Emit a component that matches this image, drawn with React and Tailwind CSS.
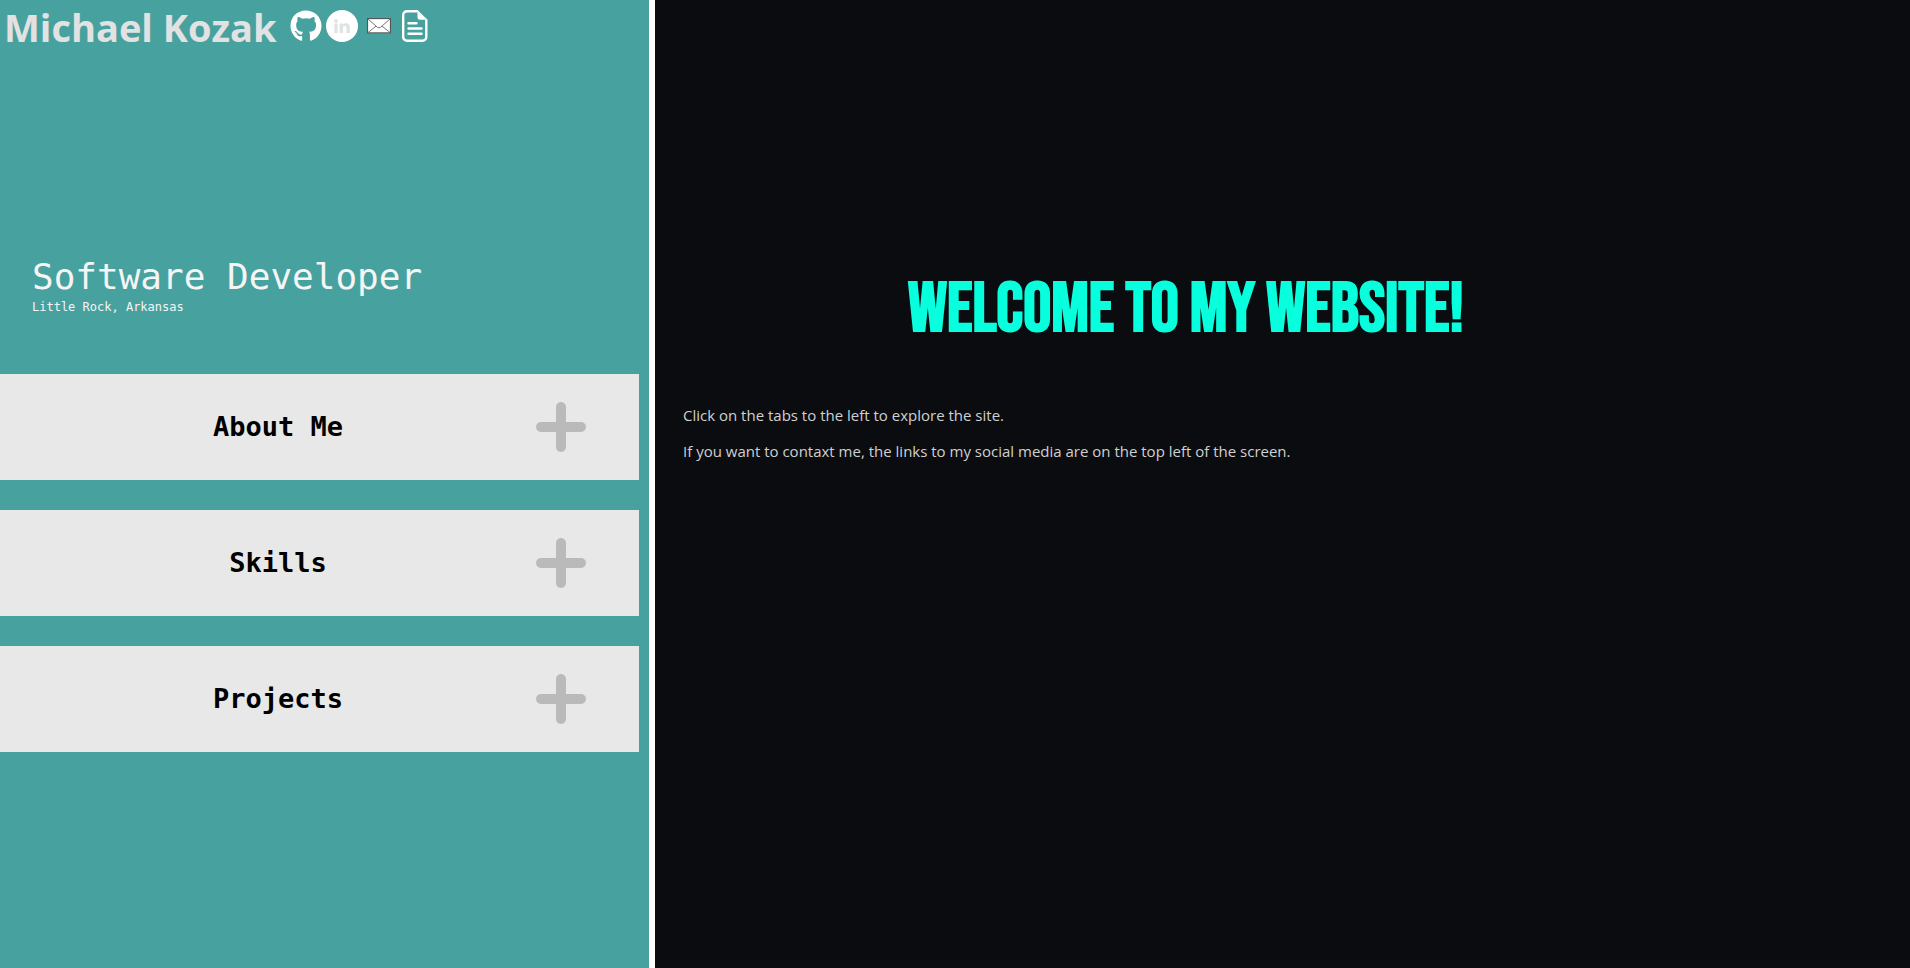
import { FaGithub } from "react-icons/fa";

const tabs = ["About Me", "Skills", "Projects"];

function LinkedInIcon() {
  return (
    <svg viewBox="0 0 32 32" className="size-8" aria-hidden="true">
      <circle cx="16" cy="16" r="16" fill="#fff" />
      <g fill="#dfe3e3">
        <circle cx="10" cy="11" r="1.9" />
        <rect x="8.4" y="13.6" width="3.3" height="9.4" />
        <path d="M13.6 13.6h3.1v1.4c.6-1 1.7-1.7 3.2-1.7 3 0 3.9 1.9 3.9 4.7v5h-3.3v-4.6c0-1.300-.3-2.400-1.700-2.400s-1.900 1-1.900 2.400V23h-3.300z" />
      </g>
    </svg>
  );
}

function MailIcon() {
  return (
    <svg viewBox="0 0 24 16" className="h-4 w-6" aria-hidden="true">
      <rect x="0.600" y="0.600" width="22.800" height="14.300" fill="#fff" stroke="#4a4a4a" />
      <path d="M1 1l9.300 8.200q1.700 1.300 3.400 0L23 1M1 14.500l8-6.300M23 14.500l-8-6.300" fill="none" stroke="#6a6a6a" strokeWidth="0.900" />
      <path d="M0.500 15.300h23" stroke="#777" />
    </svg>
  );
}

function DocumentIcon() {
  return (
    <svg viewBox="0 0 26 32" className="h-8 w-[26px]" aria-hidden="true">
      <path d="M16 1.200H5A3.800 3.800 0 0 0 1.200 5v22A3.800 3.800 0 0 0 5 30.800h15.500a3.800 3.800 0 0 0 3.800-3.800V9.500" fill="none" stroke="#fff" strokeWidth="2.400" />
      <path d="M15.500 0.100l10 9.700h-7.500a2.500 2.500 0 0 1-2.500-2.500z" fill="#fff" />
      <path d="M6.500 13.300h8M6.500 18.500h13M6.500 23.700h13" stroke="#fff" strokeWidth="2.400" strokeLinecap="round" />
    </svg>
  );
}

function PlusIcon() {
  return (
    <svg viewBox="0 0 50 50" className="size-[50px] shrink-0" aria-hidden="true">
      <path d="M25 5v40M5 25h40" stroke="#bababa" strokeWidth="10" strokeLinecap="round" />
    </svg>
  );
}

export default function App() {
  return (
    <div className="flex min-h-screen bg-[#0b0c10]">
      <aside className="w-[655px] max-w-1/2 border-r-6 border-white bg-[#47a19f] font-['DejaVu_Sans_Mono',monospace]">
        <header className="flex h-[54px] items-start pl-1">
          <h1 className="mr-[13px] font-['Open_Sans',sans-serif] text-[38px] leading-[54px] font-bold whitespace-nowrap text-[#e2e2e2]">
            Michael Kozak
          </h1>
          <nav className="flex h-[52px] items-center gap-1 text-white">
            <a href="#github" aria-label="GitHub"><FaGithub className="size-8" /></a>
            <a href="#linkedin" aria-label="LinkedIn"><LinkedInIcon /></a>
            <a href="#email" aria-label="Email" className="px-[5px]"><MailIcon /></a>
            <a href="#resume" aria-label="Resume" className="pl-0.5"><DocumentIcon /></a>
          </nav>
        </header>
        <div className="mt-[199px] pl-8 text-[#f5f5f5]">
          <p className="text-4xl leading-[48px]">Software Developer</p>
          <p className="text-xs leading-3">Little Rock, Arkansas</p>
        </div>
        <div className="mt-[61px] mr-[10px] flex flex-col gap-[30px]">
          {tabs.map((tab) => (
            <button key={tab} type="button" className="flex h-[106px] items-center bg-[#e8e8e8] pr-[53px] pl-5 text-[27px] font-bold text-black">
              <span className="flex-1">{tab}</span>
              <PlusIcon />
            </button>
          ))}
        </div>
      </aside>
      <main className="flex-1 pl-7 font-['Open_Sans',sans-serif] text-[15px] leading-6 text-[#d0d0d0]">
        <div className="w-[82%] pt-[262px]">
          <h2 className="text-center font-['Bebas_Neue','Roboto_Condensed','Inter',sans-serif] text-[70px] leading-[96px] font-bold whitespace-nowrap text-[#08ffde]">
            WELCOME TO MY WEBSITE!
          </h2>
          <p className="mt-[45px]">Click on the tabs to the left to explore the site.</p>
          <p className="mt-3">If you want to contaxt me, the links to my social media are on the top left of the screen.</p>
        </div>
      </main>
    </div>
  );
}
